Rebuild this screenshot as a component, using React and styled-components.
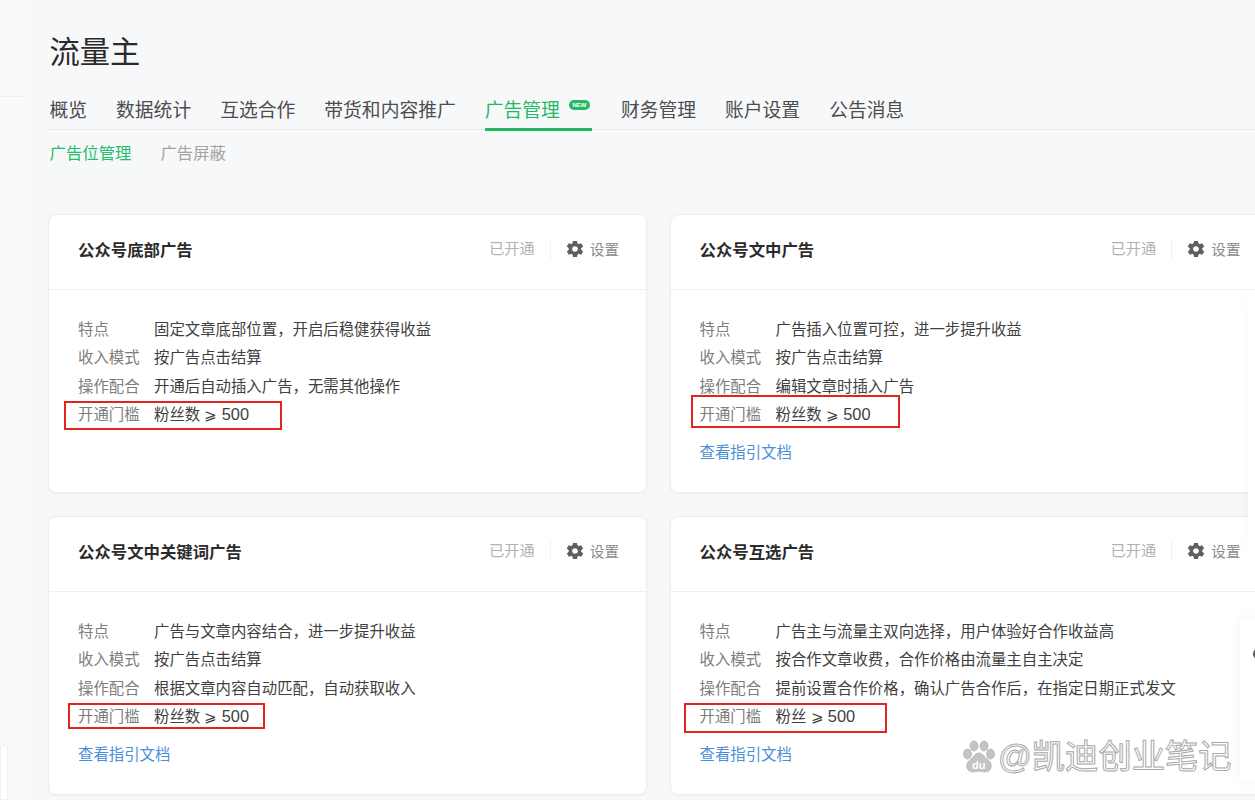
import React from 'react'
import styled, { createGlobalStyle } from 'styled-components'
import { IoMdSettings } from 'react-icons/io'

const GlobalStyle = createGlobalStyle`
  html, body {
    margin: 0;
    padding: 0;
    height: 800px;
    overflow: hidden;
    background: #f7f8fa;
  }
  body {
    font-family: "Liberation Sans", "Noto Sans CJK SC", sans-serif;
  }
`

const Page = styled.div`
  position: relative;
  width: 1255px;
  height: 800px;
  overflow: hidden;
  box-sizing: border-box;
  padding: 31px 0 0 48px;
`

const Title = styled.h1`
  margin: 0 0 0 1.5px;
  font-size: 30.3px;
  line-height: 44px;
  font-weight: 400;
  color: #2a2a2a;
`

const Tabs = styled.div`
  display: flex;
  gap: 29px;
  margin-top: 12px;
  padding-left: 1.5px;
  height: 43px;
  border-bottom: 1px solid #e9eaec;
  box-sizing: border-box;
`

const Tab = styled.div`
  position: relative;
  display: flex;
  align-items: flex-start;
  height: 44px;
  font-size: 18.8px;
  line-height: 48px;
  color: ${props => (props.$active ? '#1fb863' : '#4d4d4d')};
  border-bottom: ${props => (props.$active ? '3px solid #1fb863' : 'none')};
  box-sizing: border-box;
`

const NewBadge = styled.span`
  width: 21px;
  height: 10px;
  margin: 13px 2px 0 9px;
  border-radius: 5px;
  background: #25b765;
  color: #fff;
  font-size: 6px;
  line-height: 10px;
  font-weight: 700;
  text-align: center;
`

const SubTabs = styled.div`
  display: flex;
  gap: 29px;
  padding: 11px 0 0 1.5px;
  height: 24px;
`

const SubTab = styled.div`
  font-size: 16.4px;
  line-height: 24px;
  color: ${props => (props.$active ? '#25bd6b' : '#a3a3a3')};
`

const Grid = styled.div`
  display: grid;
  grid-template-columns: 599px 599px;
  grid-auto-rows: 279px;
  column-gap: 22.5px;
  row-gap: 23px;
  margin-top: 49px;
`

const Card = styled.section`
  position: relative;
  background: #fff;
  border: 1px solid #ecedf0;
  border-radius: 8px;
  box-sizing: border-box;
  box-shadow: 0 1px 3px rgba(0, 0, 0, 0.04);
`

const CardHead = styled.header`
  display: flex;
  align-items: center;
  height: 74px;
  box-sizing: content-box;
  padding: 0 27px 0 29px;
  border-bottom: 1px solid #eeeff1;
`

const CardTitle = styled.h2`
  flex: 1;
  margin: 0 0 7px;
  font-size: 16.4px;
  font-weight: 700;
  color: #2b2b2b;
`

const Status = styled.span`
  margin-bottom: 7px;
  font-size: 15.3px;
  color: #b2b2b2;
  padding-right: 15px;
  border-right: 1px solid #f1f1f1;
  line-height: 20px;
`

const Setting = styled.span`
  display: flex;
  align-items: center;
  gap: 5px;
  margin: 0 0 7px 14px;
  font-size: 14.6px;
  color: #8c8c8c;

  svg {
    width: 20px;
    height: 20px;
    color: #5f5f5f;
  }
`

const CardBody = styled.div`
  padding: 26px 29px 0;
`

const Row = styled.div`
  display: flex;
  height: 28.4px;
  font-size: 15.4px;
  line-height: 28px;
`

const Label = styled.span`
  width: 76px;
  flex: none;
  color: #7d7d7d;
`

const Value = styled.span`
  color: #3f3f3f;
  white-space: nowrap;
`

const Num = styled.span`
  font-size: 16.4px;
  line-height: 1;
`

const GuideLink = styled.a`
  display: block;
  margin-top: 9px;
  font-size: 15.4px;
  line-height: 28px;
  color: #4a90d9;
`

const Highlight = styled.div`
  position: absolute;
  left: ${props => props.$left}px;
  top: ${props => props.$top}px;
  width: ${props => props.$width}px;
  height: ${props => props.$height}px;
  border: 2.5px solid #e3231d;
  box-sizing: border-box;
`

const LeftRail = styled.div`
  position: absolute;
  left: 0;
  top: 0;
  width: 26px;
  height: 800px;
  background: #f9fafb;
`

const RailLine = styled.div`
  position: absolute;
  left: 0;
  top: 96px;
  width: 26px;
  height: 1px;
  background: #eeeff1;
`

const RailBox = styled.div`
  position: absolute;
  left: 0;
  top: 745px;
  width: 8px;
  height: 55px;
  background: #fff;
  border: 1px solid #f0f1f3;
  border-radius: 0 4px 0 0;
  box-sizing: border-box;
`

const SidePanel = styled.div`
  position: absolute;
  right: 0;
  top: ${props => props.$top}px;
  width: ${props => props.$width}px;
  height: ${props => props.$height}px;
  background: #fff;
  box-shadow: 0 0 16px rgba(0, 0, 0, 0.05);
`

const SideArc = styled.div`
  position: absolute;
  left: 13px;
  top: 30px;
  width: 12px;
  height: 12px;
  border: 2px solid #555;
  border-radius: 50%;
  box-sizing: border-box;
`

const Watermark = styled.div`
  position: absolute;
  left: 963px;
  top: 735px;
  display: flex;
  align-items: center;
  gap: 3px;
  font-size: 33.3px;
  line-height: 44px;
  color: rgba(255, 255, 255, 0.7);
  -webkit-text-stroke: 1px #a9a9a9;
  white-space: nowrap;
`

const PawText = styled.text`
  font-family: "Liberation Sans", sans-serif;
  font-size: 11px;
  font-weight: 700;
  fill: #fff;
  -webkit-text-stroke: 0;
`

const BaiduPaw = () => (
  <svg width="32" height="36" viewBox="0 0 32 36">
    <g fill="#c4c4c4" stroke="#a9a9a9" strokeWidth="0.6">
      <ellipse cx="11" cy="7" rx="4" ry="5" />
      <ellipse cx="21" cy="7" rx="4" ry="5" />
      <ellipse cx="4.5" cy="15" rx="4" ry="5" />
      <ellipse cx="27.5" cy="15" rx="4" ry="5" />
      <path d="M16 14c-4 0-5 4-8 6-3 2-5 5-4 9 1 3 4 4 7 4 2 0 3-1 5-1s3 1 5 1c3 0 6-1 7-4 1-4-1-7-4-9-3-2-4-6-8-6z" />
    </g>
    <PawText x="9" y="30">du</PawText>
  </svg>
)

const cards = [
  {
    title: '公众号底部广告',
    rows: ['固定文章底部位置，开启后稳健获得收益', '按广告点击结算', '开通后自动插入广告，无需其他操作'],
    fans: '粉丝数',
    box: { left: 15, top: 186, width: 218, height: 29 }
  },
  {
    title: '公众号文中广告',
    rows: ['广告插入位置可控，进一步提升收益', '按广告点击结算', '编辑文章时插入广告'],
    fans: '粉丝数',
    link: true,
    box: { left: 20, top: 180, width: 209, height: 33 }
  },
  {
    title: '公众号文中关键词广告',
    rows: ['广告与文章内容结合，进一步提升收益', '按广告点击结算', '根据文章内容自动匹配，自动获取收入'],
    fans: '粉丝数',
    link: true,
    box: { left: 19, top: 186, width: 197, height: 26 }
  },
  {
    title: '公众号互选广告',
    rows: ['广告主与流量主双向选择，用户体验好合作收益高', '按合作文章收费，合作价格由流量主自主决定', '提前设置合作价格，确认广告合作后，在指定日期正式发文'],
    fans: '粉丝',
    link: true,
    box: { left: 13, top: 186, width: 203, height: 30 }
  }
]

const labels = ['特点', '收入模式', '操作配合']
const tabs = ['概览', '数据统计', '互选合作', '带货和内容推广', '广告管理', '财务管理', '账户设置', '公告消息']

export default function App() {
  return (
    <Page>
      <GlobalStyle />
      <LeftRail />
      <RailLine />
      <RailBox />
      <Title>流量主</Title>
      <Tabs>
        {tabs.map(tab => (
          <Tab key={tab} $active={tab === '广告管理'}>
            {tab}
            {tab === '广告管理' && <NewBadge>NEW</NewBadge>}
          </Tab>
        ))}
      </Tabs>
      <SubTabs>
        <SubTab $active>广告位管理</SubTab>
        <SubTab>广告屏蔽</SubTab>
      </SubTabs>
      <Grid>
        {cards.map(card => (
          <Card key={card.title}>
            <CardHead>
              <CardTitle>{card.title}</CardTitle>
              <Status>已开通</Status>
              <Setting>
                <IoMdSettings />
                设置
              </Setting>
            </CardHead>
            <CardBody>
              {card.rows.map((row, i) => (
                <Row key={labels[i]}>
                  <Label>{labels[i]}</Label>
                  <Value>{row}</Value>
                </Row>
              ))}
              <Row>
                <Label>开通门槛</Label>
                <Value>
                  {card.fans} ⩾ <Num>500</Num>
                </Value>
              </Row>
              {card.link && <GuideLink>查看指引文档</GuideLink>}
            </CardBody>
            <Highlight
              $left={card.box.left}
              $top={card.box.top}
              $width={card.box.width}
              $height={card.box.height}
            />
          </Card>
        ))}
      </Grid>
      <SidePanel $top={298} $width={7} $height={252} />
      <SidePanel $top={618} $width={15} $height={162}>
        <SideArc />
      </SidePanel>
      <Watermark>
        <BaiduPaw />
        @凯迪创业笔记
      </Watermark>
    </Page>
  )
}
